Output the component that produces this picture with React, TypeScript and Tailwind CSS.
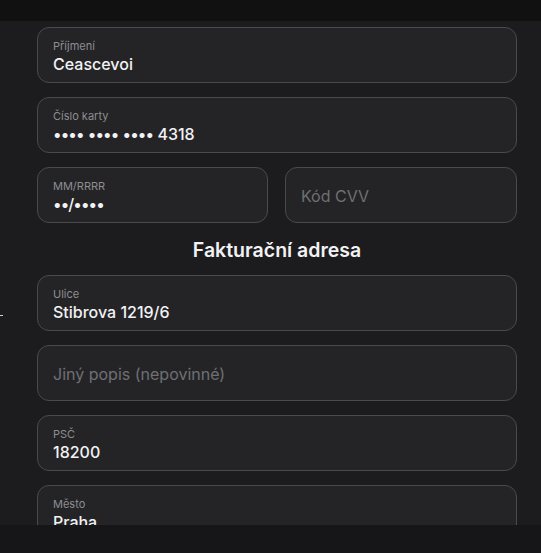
const font = { fontFamily: 'Inter, "Noto Sans", sans-serif' };

function Field({ label, value, placeholder }: { label?: string; value?: React.ReactNode; placeholder?: string }) {
  return (
    <div className="h-[56px] w-full rounded-[12px] border border-[#4a4a4d] bg-[#242426] px-[15px] pt-[2px] flex flex-col justify-center">
      {label ? (
        <>
          <div className="text-[11px] leading-[14px] text-[#8d8d92]">{label}</div>
          <div className="mt-[1px] text-[16px] leading-[20px] text-[#f2f2f4] font-medium">{value}</div>
        </>
      ) : (
        <div className="text-[16px] leading-[20px] text-[#6f6f74]">{placeholder}</div>
      )}
    </div>
  );
}

function Dots({ children }: { children: string }) {
  return <span className="tracking-[-0.9px]">{children}</span>;
}

export default function App() {
  return (
    <div className="relative w-[541px] h-[553px] flex flex-col bg-[#1c1c1e] overflow-hidden" style={font}>
      <div className="h-[21px] bg-[#111111] shrink-0" />
      <div className="flex-1 overflow-hidden pl-[37px] pr-[24px] pt-[6px]">
        <div className="flex flex-col gap-[14px]">
          <Field label="Příjmení" value="Ceascevoi" />
          <Field
            label="Číslo karty"
            value={
              <>
                <Dots>••••</Dots> <Dots>••••</Dots> <Dots>••••</Dots> 4318
              </>
            }
          />
          <div className="flex gap-[17px]">
            <div className="w-[231px]">
              <Field label="MM/RRRR" value={<Dots>••/••••</Dots>} />
            </div>
            <div className="flex-1">
              <Field placeholder="Kód CVV" />
            </div>
          </div>
          <h2 className="text-center text-[19.5px] leading-[24px] font-semibold text-[#f2f2f4] mt-[1px] -mb-[1px]">
            Fakturační adresa
          </h2>
          <Field label="Ulice" value="Stibrova 1219/6" />
          <Field placeholder="Jiný popis (nepovinné)" />
          <Field label="PSČ" value="18200" />
          <Field label="Město" value="Praha" />
        </div>
      </div>
      <div className="h-[28px] bg-[#161618] shrink-0" />
      <span className="absolute left-0 top-[315px] h-[1px] w-[3px] bg-white/80" />
    </div>
  );
}
